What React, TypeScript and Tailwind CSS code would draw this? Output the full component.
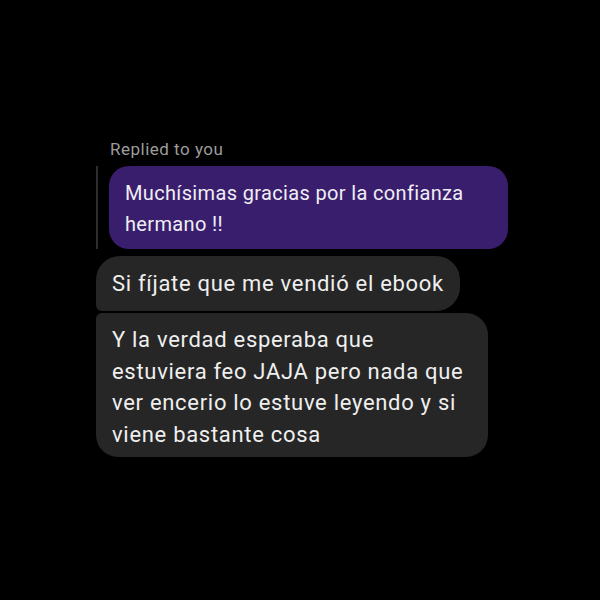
import React from 'react'

const font = { fontFamily: 'Roboto, "Noto Sans", sans-serif' }

export default function App() {
  return (
    <div className="w-[600px] h-[600px] bg-black overflow-hidden" style={font}>
      <div className="flex flex-col items-start pl-[96px] pt-[139px]">
        {/* reply header */}
        <div className="ml-[14px] text-[17px] leading-[20px] tracking-[0.5px] text-[#9c9c9c]">Replied to you</div>
        <div className="mt-[7px] flex items-stretch">
          <div className="w-[2px] bg-[#2e2e2e]" />
          <div className="ml-[11px] w-[399px] rounded-[20px] bg-[#3a1e6e] px-[16px] pt-[12px] pb-[9px] text-[20px] leading-[31px] tracking-[0.35px] text-[#f0eef4]">
            Muchísimas gracias por la confianza hermano !!
          </div>
        </div>

        {/* messages */}
        <div className="mt-[7px] rounded-[24px] rounded-bl-[6px] bg-[#262626] px-[16px] py-[12px] text-[22px] leading-[31px] tracking-[0.7px] text-[#efefef]">
          Si fíjate que me vendió el ebook
        </div>
        <div className="mt-[2px] w-[392px] rounded-[22px] rounded-tl-[6px] bg-[#262626] px-[16px] pt-[11px] pb-[7px] text-[22px] leading-[31.5px] tracking-[0.7px] text-[#efefef]">
          Y la verdad esperaba que estuviera feo JAJA pero nada que ver encerio lo estuve leyendo y si viene bastante cosa
        </div>
      </div>
    </div>
  )
}
